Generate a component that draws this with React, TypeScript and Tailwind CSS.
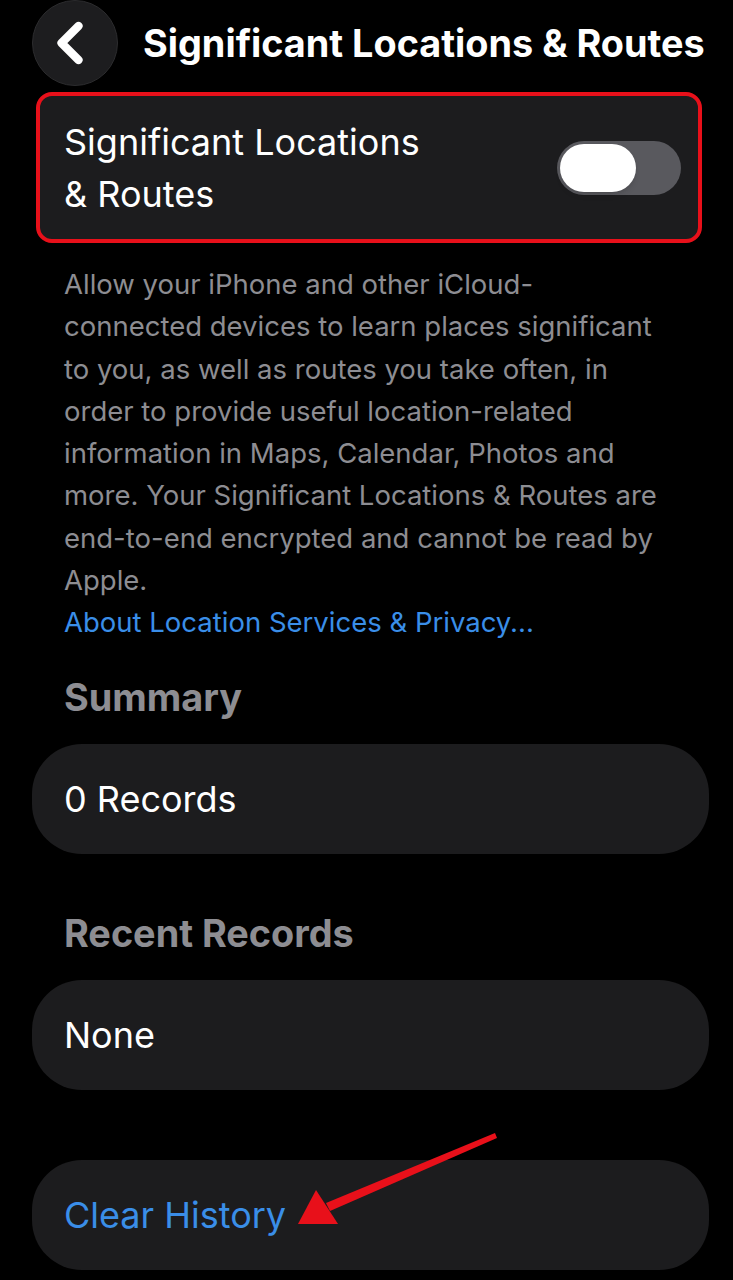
import { ChevronLeft } from 'lucide-react'

const font = { fontFamily: 'Inter, "Noto Sans", "Liberation Sans", sans-serif' }

const Toggle = () => (
  <div className="w-[124px] h-[54px] rounded-full bg-[#59595e] p-[3px] flex items-center">
    <div className="w-[76px] h-[48px] rounded-full bg-white shadow-md" />
  </div>
)

const Card = ({ children }: { children: React.ReactNode }) => (
  <div className="ml-[32px] mr-[24px] h-[110px] rounded-[50px] bg-[#1c1c1e] flex items-center px-[32px]">
    {children}
  </div>
)

export default function App() {
  return (
    <div className="relative w-[733px] h-[1280px] bg-black overflow-hidden" style={font}>
      {/* header */}
      <div className="flex items-center h-[86px]">
        <div className="ml-[32px] w-[86px] h-[86px] rounded-full bg-[#1d1d1f] border border-[#2c2c2e] flex items-center justify-center">
          <ChevronLeft className="w-[68px] h-[68px] text-white -ml-[10px]" strokeWidth={2.9} />
        </div>
        <h1 className="ml-[25px] text-[37.8px] font-bold text-white whitespace-nowrap">
          Significant Locations &amp; Routes
        </h1>
      </div>

      {/* toggle row */}
      <div className="ml-[36px] mr-[31px] mt-[6px] h-[151px] rounded-[16px] border-4 border-[#e8101a] bg-[#1c1c1e] flex items-center justify-between pl-[24px] pr-[17px]">
        <div className="text-[36px] leading-[52px] text-white">
          Significant Locations
          <br />
          &amp; Routes
        </div>
        <Toggle />
      </div>

      {/* description */}
      <div className="mt-[20px] px-[64px] text-[27.5px] leading-[42.3px] text-[#8d8d92] whitespace-nowrap">
        <p>
          Allow your iPhone and other iCloud-
          <br />
          connected devices to learn places significant
          <br />
          to you, as well as routes you take often, in
          <br />
          order to provide useful location-related
          <br />
          information in Maps, Calendar, Photos and
          <br />
          more. Your Significant Locations &amp; Routes are
          <br />
          end-to-end encrypted and cannot be read by
          <br />
          Apple.
        </p>
        <p className="text-[#3a8ee8]">About Location Services &amp; Privacy...</p>
      </div>

      {/* summary */}
      <h2 className="mt-[33px] px-[64px] text-[37.8px] leading-[40px] font-bold text-[#8d8d92]">Summary</h2>
      <div className="mt-[27px]">
        <Card>
          <span className="text-[36px] text-white">0 Records</span>
        </Card>
      </div>

      <h2 className="mt-[59px] px-[64px] text-[37.8px] leading-[40px] font-bold text-[#8d8d92]">Recent Records</h2>
      <div className="mt-[27px]">
        <Card>
          <span className="text-[36px] text-white">None</span>
        </Card>
      </div>

      <div className="mt-[70px]">
        <Card>
          <span className="text-[36px] text-[#3a8ee8]">Clear History</span>
        </Card>
      </div>

      {/* annotation arrow */}
      <svg className="absolute left-0 top-0 pointer-events-none" width="733" height="1280">
        <polygon points="495,1133 497,1138 330,1211 326,1203" fill="#e8101a" />
        <polygon points="298,1224 316,1190 338,1224" fill="#e8101a" />
      </svg>
    </div>
  )
}
